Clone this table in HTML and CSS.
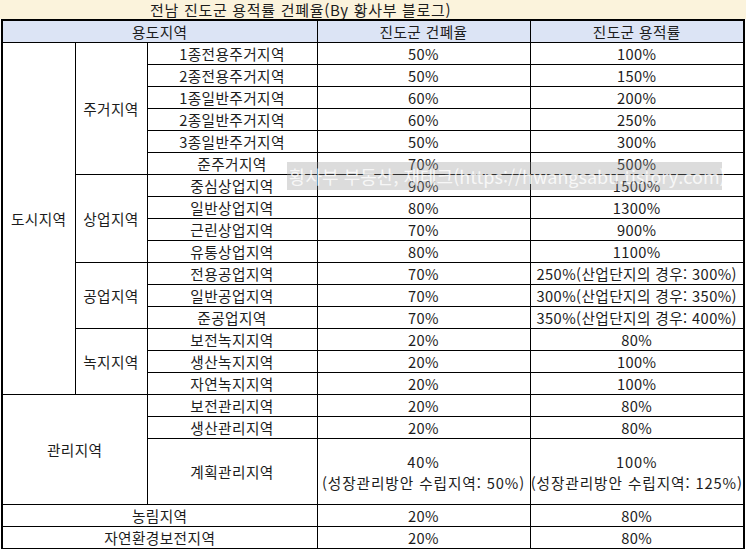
FILE: index.html
```html
<!DOCTYPE html>
<html lang="ko">
<head>
<meta charset="utf-8">
<title>전남 진도군 용적률 건폐율</title>
<link rel="stylesheet" href="styles.css">
</head>
<body>
<div class="title">전남 진도군 용적률 건폐율(By 황사부 블로그)</div>
<div class="wrap">
<table class="grid">
  <colgroup>
    <col class="c1"><col class="c2"><col class="c3"><col class="c4"><col class="c5">
  </colgroup>
  <thead>
    <tr class="head"><th colspan="3">용도지역</th><th>진도군 건폐율</th><th>진도군 용적률</th></tr>
  </thead>
  <tbody>
    <tr><td rowspan="16">도시지역</td><td rowspan="6">주거지역</td><td>1종전용주거지역</td><td>50%</td><td>100%</td></tr>
    <tr><td>2종전용주거지역</td><td>50%</td><td>150%</td></tr>
    <tr><td>1종일반주거지역</td><td>60%</td><td>200%</td></tr>
    <tr><td>2종일반주거지역</td><td>60%</td><td>250%</td></tr>
    <tr><td>3종일반주거지역</td><td>50%</td><td>300%</td></tr>
    <tr><td>준주거지역</td><td>70%</td><td>500%</td></tr>
    <tr><td rowspan="4">상업지역</td><td>중심상업지역</td><td>90%</td><td>1500%</td></tr>
    <tr><td>일반상업지역</td><td>80%</td><td>1300%</td></tr>
    <tr><td>근린상업지역</td><td>70%</td><td>900%</td></tr>
    <tr><td>유통상업지역</td><td>80%</td><td>1100%</td></tr>
    <tr><td rowspan="3">공업지역</td><td>전용공업지역</td><td>70%</td><td>250%(산업단지의 경우: 300%)</td></tr>
    <tr><td>일반공업지역</td><td>70%</td><td>300%(산업단지의 경우: 350%)</td></tr>
    <tr><td>준공업지역</td><td>70%</td><td>350%(산업단지의 경우: 400%)</td></tr>
    <tr><td rowspan="3">녹지지역</td><td>보전녹지지역</td><td>20%</td><td>80%</td></tr>
    <tr><td>생산녹지지역</td><td>20%</td><td>100%</td></tr>
    <tr><td>자연녹지지역</td><td>20%</td><td>100%</td></tr>
    <tr><td colspan="2" rowspan="3">관리지역</td><td>보전관리지역</td><td>20%</td><td>80%</td></tr>
    <tr><td>생산관리지역</td><td>20%</td><td>80%</td></tr>
    <tr class="tall"><td>계획관리지역</td><td class="wide">40%<br>(성장관리방안 수립지역: 50%)</td><td class="wide">100%<br>(성장관리방안 수립지역: 125%)</td></tr>
    <tr><td colspan="3">농림지역</td><td>20%</td><td>80%</td></tr>
    <tr class="last"><td colspan="3">자연환경보전지역</td><td>20%</td><td>80%</td></tr>
  </tbody>
</table>
<div class="watermark">황사부 부동산, 재테크(https://hwangsabu.tistory.com)</div>
</div>
</body>
</html>
```
FILE: styles.css
```css
html, body {
  margin: 0;
  padding: 0;
  background: #ffffff;
}
body {
  font-family: "Noto Sans CJK KR", "Noto Sans", sans-serif;
  font-size: 14.67px;
  color: #1c1c1c;
  width: 746px;
  height: 549px;
  overflow: hidden;
}
.title {
  height: 19px;
  line-height: 19px;
  background: #fbf3dc;
  padding-left: 150px;
  font-size: 15px;
  letter-spacing: 0.7px;
  white-space: nowrap;
  color: #1c1c1c;
}
.wrap {
  position: relative;
  padding-left: 1px;
}
.grid {
  border-collapse: collapse;
  table-layout: fixed;
  width: 744px;
  border: 2px solid #000;
}
.c1 { width: 73px; }
.c2 { width: 72px; }
.c3 { width: 170px; }
.c4 { width: 213px; }
.c5 { width: 214px; }
.grid th,
.grid td {
  border: 1px solid #000;
  padding: 0;
  text-align: center;
  vertical-align: middle;
  font-weight: normal;
  line-height: 21px;
  letter-spacing: 0.4px;
  white-space: nowrap;
  overflow: visible;
}
.grid th {
  background: #dce4f5;
}
.grid tr { height: 22px; }
.grid tr.head { height: 22px; }
.grid tr.tall { height: 66px; }
.grid tr.last { height: 21px; }
.grid td.wide {
  letter-spacing: 0.9px;
}
.watermark {
  position: absolute;
  left: 287px;
  top: 143px;
  width: 435px;
  height: 28px;
  line-height: 28px;
  padding-left: 2px;
  box-sizing: border-box;
  background: rgba(150, 150, 150, 0.33);
  color: rgba(255, 255, 255, 0.8);
  font-size: 18px;
  white-space: nowrap;
}
```
